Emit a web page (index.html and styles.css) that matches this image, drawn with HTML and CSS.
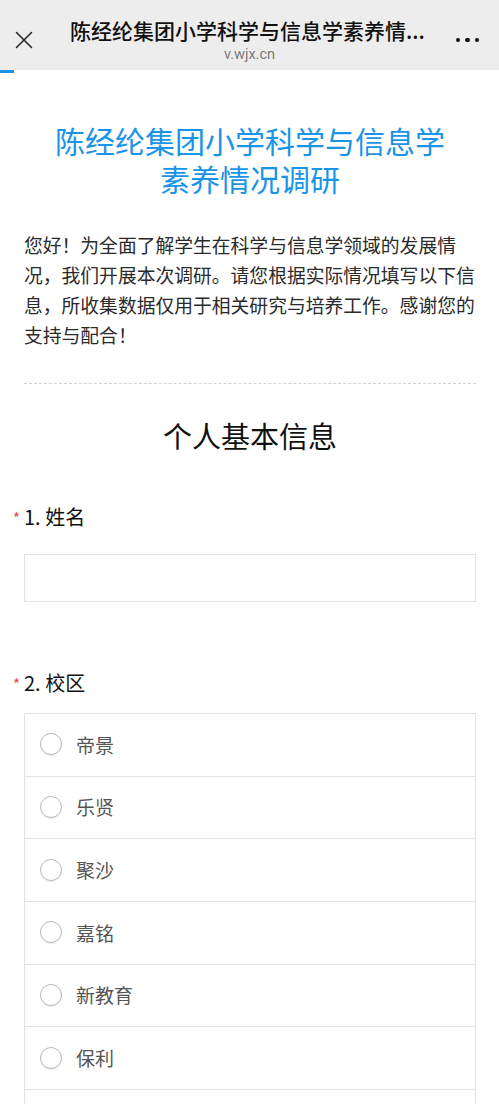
FILE: index.html
```html
<!DOCTYPE html>
<html lang="zh-CN">
<head>
<meta charset="utf-8">
<title>陈经纶集团小学科学与信息学素养情况调研</title>
<link rel="stylesheet" href="styles.css">
</head>
<body>
<header class="topbar">
  <div class="topbar-side topbar-left">
    <svg class="close-icon" width="18" height="18" viewBox="0 0 18 18" aria-hidden="true">
      <path d="M1.5 1.5 L16.5 16.5 M16.5 1.5 L1.5 16.5" stroke="#222" stroke-width="1.5" fill="none" stroke-linecap="round"/>
    </svg>
  </div>
  <div class="topbar-center">
    <div class="topbar-title">陈经纶集团小学科学与信息学素养情...</div>
    <div class="topbar-url">v.wjx.cn</div>
  </div>
  <div class="topbar-side topbar-right">
    <span class="dot"></span><span class="dot"></span><span class="dot"></span>
  </div>
</header>
<div class="progress"><div class="progress-fill"></div></div>

<main class="content">
  <h1 class="survey-title">陈经纶集团小学科学与信息学<br>素养情况调研</h1>
  <p class="intro">您好！为全面了解学生在科学与信息学领域的发展情况，我们开展本次调研。请您根据实际情况填写以下信息，所收集数据仅用于相关研究与培养工作。感谢您的支持与配合！</p>
  <hr class="divider">
  <h2 class="section-title">个人基本信息</h2>

  <section class="question q-name">
    <div class="q-title"><span class="req">*</span>1. 姓名</div>
    <div class="text-input"></div>
  </section>

  <section class="question q-campus">
    <div class="q-title"><span class="req">*</span>2. 校区</div>
    <ul class="options">
      <li class="option"><span class="radio"></span><span class="opt-label">帝景</span></li>
      <li class="option"><span class="radio"></span><span class="opt-label">乐贤</span></li>
      <li class="option"><span class="radio"></span><span class="opt-label">聚沙</span></li>
      <li class="option"><span class="radio"></span><span class="opt-label">嘉铭</span></li>
      <li class="option"><span class="radio"></span><span class="opt-label">新教育</span></li>
      <li class="option"><span class="radio"></span><span class="opt-label">保利</span></li>
      <li class="option"><span class="radio"></span></li>
    </ul>
  </section>
</main>
</body>
</html>
```

FILE: styles.css
```css
* { box-sizing: border-box; }

html, body {
  margin: 0;
  padding: 0;
  background: #ffffff;
  font-family: "Noto Sans CJK SC", "Noto Sans", "Liberation Sans", sans-serif;
  color: #222;
}

.topbar {
  height: 70px;
  background: #ededed;
  display: grid;
  grid-template-columns: 70px 1fr 70px;
}

.topbar-side {
  display: flex;
  align-items: center;
  padding-top: 10px;
}

.topbar-left { padding-left: 15px; }

.topbar-right {
  justify-content: flex-end;
  padding-right: 20px;
  gap: 5px;
}

.dot {
  width: 4.5px;
  height: 4.5px;
  border-radius: 50%;
  background: #111;
}

.topbar-center {
  min-width: 0;
  padding-top: 16px;
  display: flex;
  flex-direction: column;
  align-items: center;
  gap: 2px;
}

.topbar-title {
  width: 100%;
  font-size: 21px;
  line-height: 28px;
  font-weight: 500;
  color: #111;
  white-space: nowrap;
  overflow: hidden;
  text-align: left;
}

.topbar-url {
  font-family: "Roboto", "Liberation Sans", sans-serif;
  font-size: 14.5px;
  line-height: 18px;
  color: #7a7a7a;
}

.progress {
  height: 3px;
  background: #ffffff;
}

.progress-fill {
  width: 14px;
  height: 3px;
  background: #1f8fe8;
}

.content {
  padding: 0 23px 0 24px;
}

.survey-title {
  margin: 48px 0 0;
  text-align: center;
  font-size: 30px;
  line-height: 38px;
  font-weight: 400;
  color: #1a94e8;
}

.intro {
  margin: 33px 0 0;
  font-size: 18.8px;
  line-height: 30px;
  color: #2a2a2a;
}

.divider {
  margin: 33px 0 0;
  border: 0;
  border-top: 1px dashed #d2d2d2;
  height: 0;
}

.section-title {
  margin: 33px 0 0;
  text-align: center;
  font-size: 29px;
  line-height: 36px;
  font-weight: 400;
  color: #111;
}

.question { margin: 0; }

.q-name { margin-top: 49px; }
.q-campus { margin-top: 66px; }

.q-title {
  display: flex;
  align-items: center;
  font-size: 20px;
  line-height: 28px;
  color: #111;
}

.req {
  width: 12px;
  margin-left: -12px;
  color: #ee4444;
  font-size: 15px;
  line-height: 28px;
  padding-top: 2px;
  text-align: left;
  padding-left: 1px;
}

.text-input {
  margin-top: 22px;
  height: 48px;
  border: 1px solid #e2e2e2;
}

.options {
  list-style: none;
  margin: 15px 0 0;
  padding: 0;
  border: 1px solid #e2e2e2;
  border-bottom: 0;
}

.option {
  height: 62.67px;
  border-bottom: 1px solid #e2e2e2;
  display: flex;
  align-items: center;
  padding-left: 15px;
  gap: 14px;
}

.radio {
  width: 22px;
  height: 22px;
  border-radius: 50%;
  border: 1px solid #b8b8b8;
  box-shadow: 0 1px 1px rgba(0,0,0,0.08);
  flex: none;
  margin-top: -1px;
}

.opt-label {
  font-size: 19px;
  line-height: 26px;
  color: #555;
}
```
